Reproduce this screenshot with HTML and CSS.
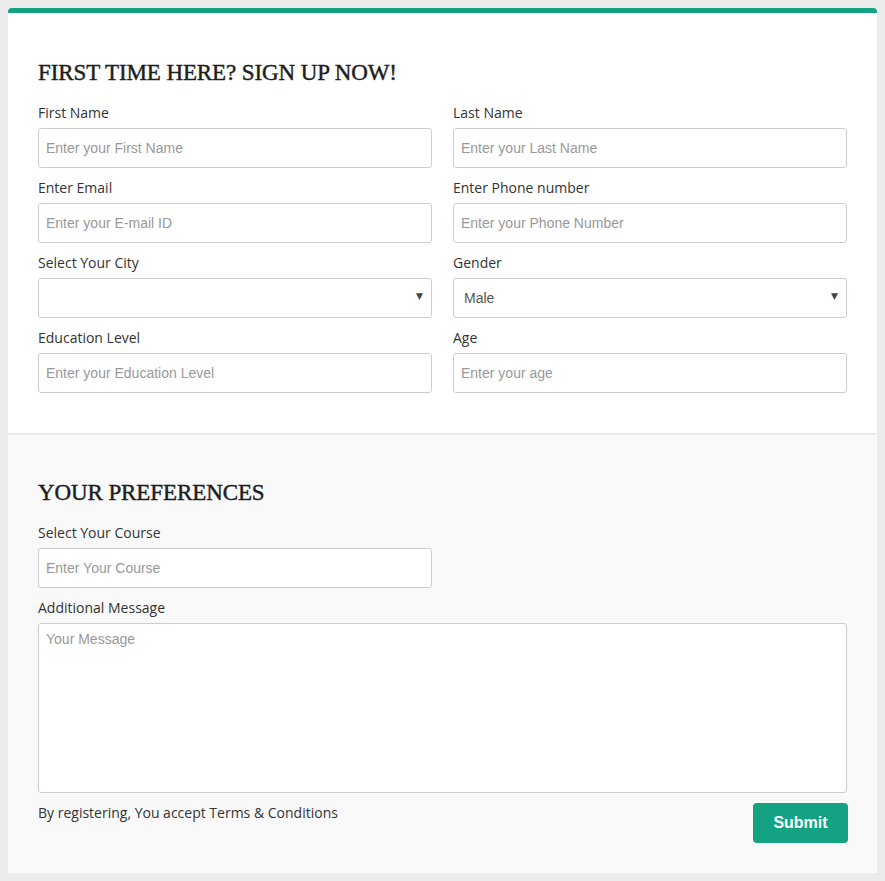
FILE: index.html
```html
<!DOCTYPE html>
<html>
<head>
<meta charset="utf-8">
<link rel="stylesheet" href="styles.css">
</head>
<body>
<form class="card">
  <section class="sec sec-top">
    <h2 class="title">FIRST TIME HERE? SIGN UP NOW!</h2>
    <div class="grid">
      <div class="field"><label>First Name</label><input class="ctl" placeholder="Enter your First Name"></div>
      <div class="field"><label>Last Name</label><input class="ctl" placeholder="Enter your Last Name"></div>
      <div class="field"><label>Enter Email</label><input class="ctl" placeholder="Enter your E-mail ID"></div>
      <div class="field"><label>Enter Phone number</label><input class="ctl" placeholder="Enter your Phone Number"></div>
      <div class="field"><label>Select Your City</label><div class="sel"><select class="ctl"><option></option></select></div></div>
      <div class="field"><label>Gender</label><div class="sel"><select class="ctl"><option>Male</option><option>Female</option></select></div></div>
      <div class="field"><label>Education Level</label><input class="ctl" placeholder="Enter your Education Level"></div>
      <div class="field"><label>Age</label><input class="ctl" placeholder="Enter your age"></div>
    </div>
  </section>
  <section class="sec sec-bottom">
    <h2 class="title">YOUR PREFERENCES</h2>
    <div class="grid">
      <div class="field"><label>Select Your Course</label><input class="ctl" placeholder="Enter Your Course"></div>
    </div>
    <div class="field"><label>Additional Message</label><textarea class="ctl area" placeholder="Your Message"></textarea></div>
    <div class="foot">
      <p class="terms">By registering, You accept Terms &amp; Conditions</p>
      <button type="button" class="submit">Submit</button>
    </div>
  </section>
</form>
</body>
</html>
```
FILE: styles.css
```css
html { background: #ececec; }
body {
  margin: 8px;
  background: #ececec;
  font-family: "Open Sans", sans-serif;
}
.card {
  background: #f9f9f9;
  border-top: 5px solid #13a383;
  border-radius: 4px 4px 0 0;
  box-shadow: 1px 1px 1px rgba(0,0,0,0.12);
}
.sec {
  padding: 45px 30px 30px 30px;
}
.sec-top {
  background: #fff;
  padding-bottom: 40px;
  box-shadow: 0 1px 2px rgba(0,0,0,0.12);
  position: relative;
}
.title {
  margin: 0 0 15px 0;
  font-family: "Liberation Serif", serif;
  font-weight: normal;
  font-size: 23px;
  line-height: 30px;
  color: #1e1e1e;
  letter-spacing: -0.1px;
  -webkit-text-stroke: 0.45px #1e1e1e;
}
.grid {
  display: grid;
  grid-template-columns: 394px 394px;
  column-gap: 21px;
}
.field {
  display: flex;
  flex-direction: column;
  margin-bottom: 10px;
}
.grid .field:nth-last-child(-n+2) { margin-bottom: 0; }
.sec-bottom .grid .field { margin-bottom: 10px; }
label {
  font-size: 14px;
  line-height: 20px;
  color: #333;
  margin-bottom: 5px;
}
.ctl {
  box-sizing: border-box;
  height: 40px;
  width: 100%;
  border: 1px solid #cdcdcd;
  border-radius: 3px;
  background: #fff;
  font-family: "Liberation Sans", Arial, sans-serif;
  font-size: 14px;
  color: #555;
  padding: 0 7px;
  margin: 0;
  outline: none;
}
.ctl::placeholder { color: #999; }
.sel { position: relative; }
.sel select {
  -webkit-appearance: none;
  appearance: none;
  padding-left: 10px;
}
.sel::after {
  content: "\25BC";
  position: absolute;
  right: 9px;
  top: 13px;
  font-size: 9px;
  color: #444;
  pointer-events: none;
  font-family: "DejaVu Sans", sans-serif;
}
.area {
  height: 170px;
  padding: 7px 7px;
  resize: none;
  display: block;
}
.foot {
  display: flex;
  justify-content: space-between;
  align-items: flex-start;
}
.terms {
  margin: 0;
  font-size: 14px;
  line-height: 20px;
  color: #333;
}
.submit {
  width: 95px;
  height: 40px;
  border: none;
  border-radius: 4px;
  background: #13a383;
  color: #fff;
  font-family: "Liberation Sans", Arial, sans-serif;
  font-weight: bold;
  font-size: 16px;
  margin-right: -1px;
}
```
